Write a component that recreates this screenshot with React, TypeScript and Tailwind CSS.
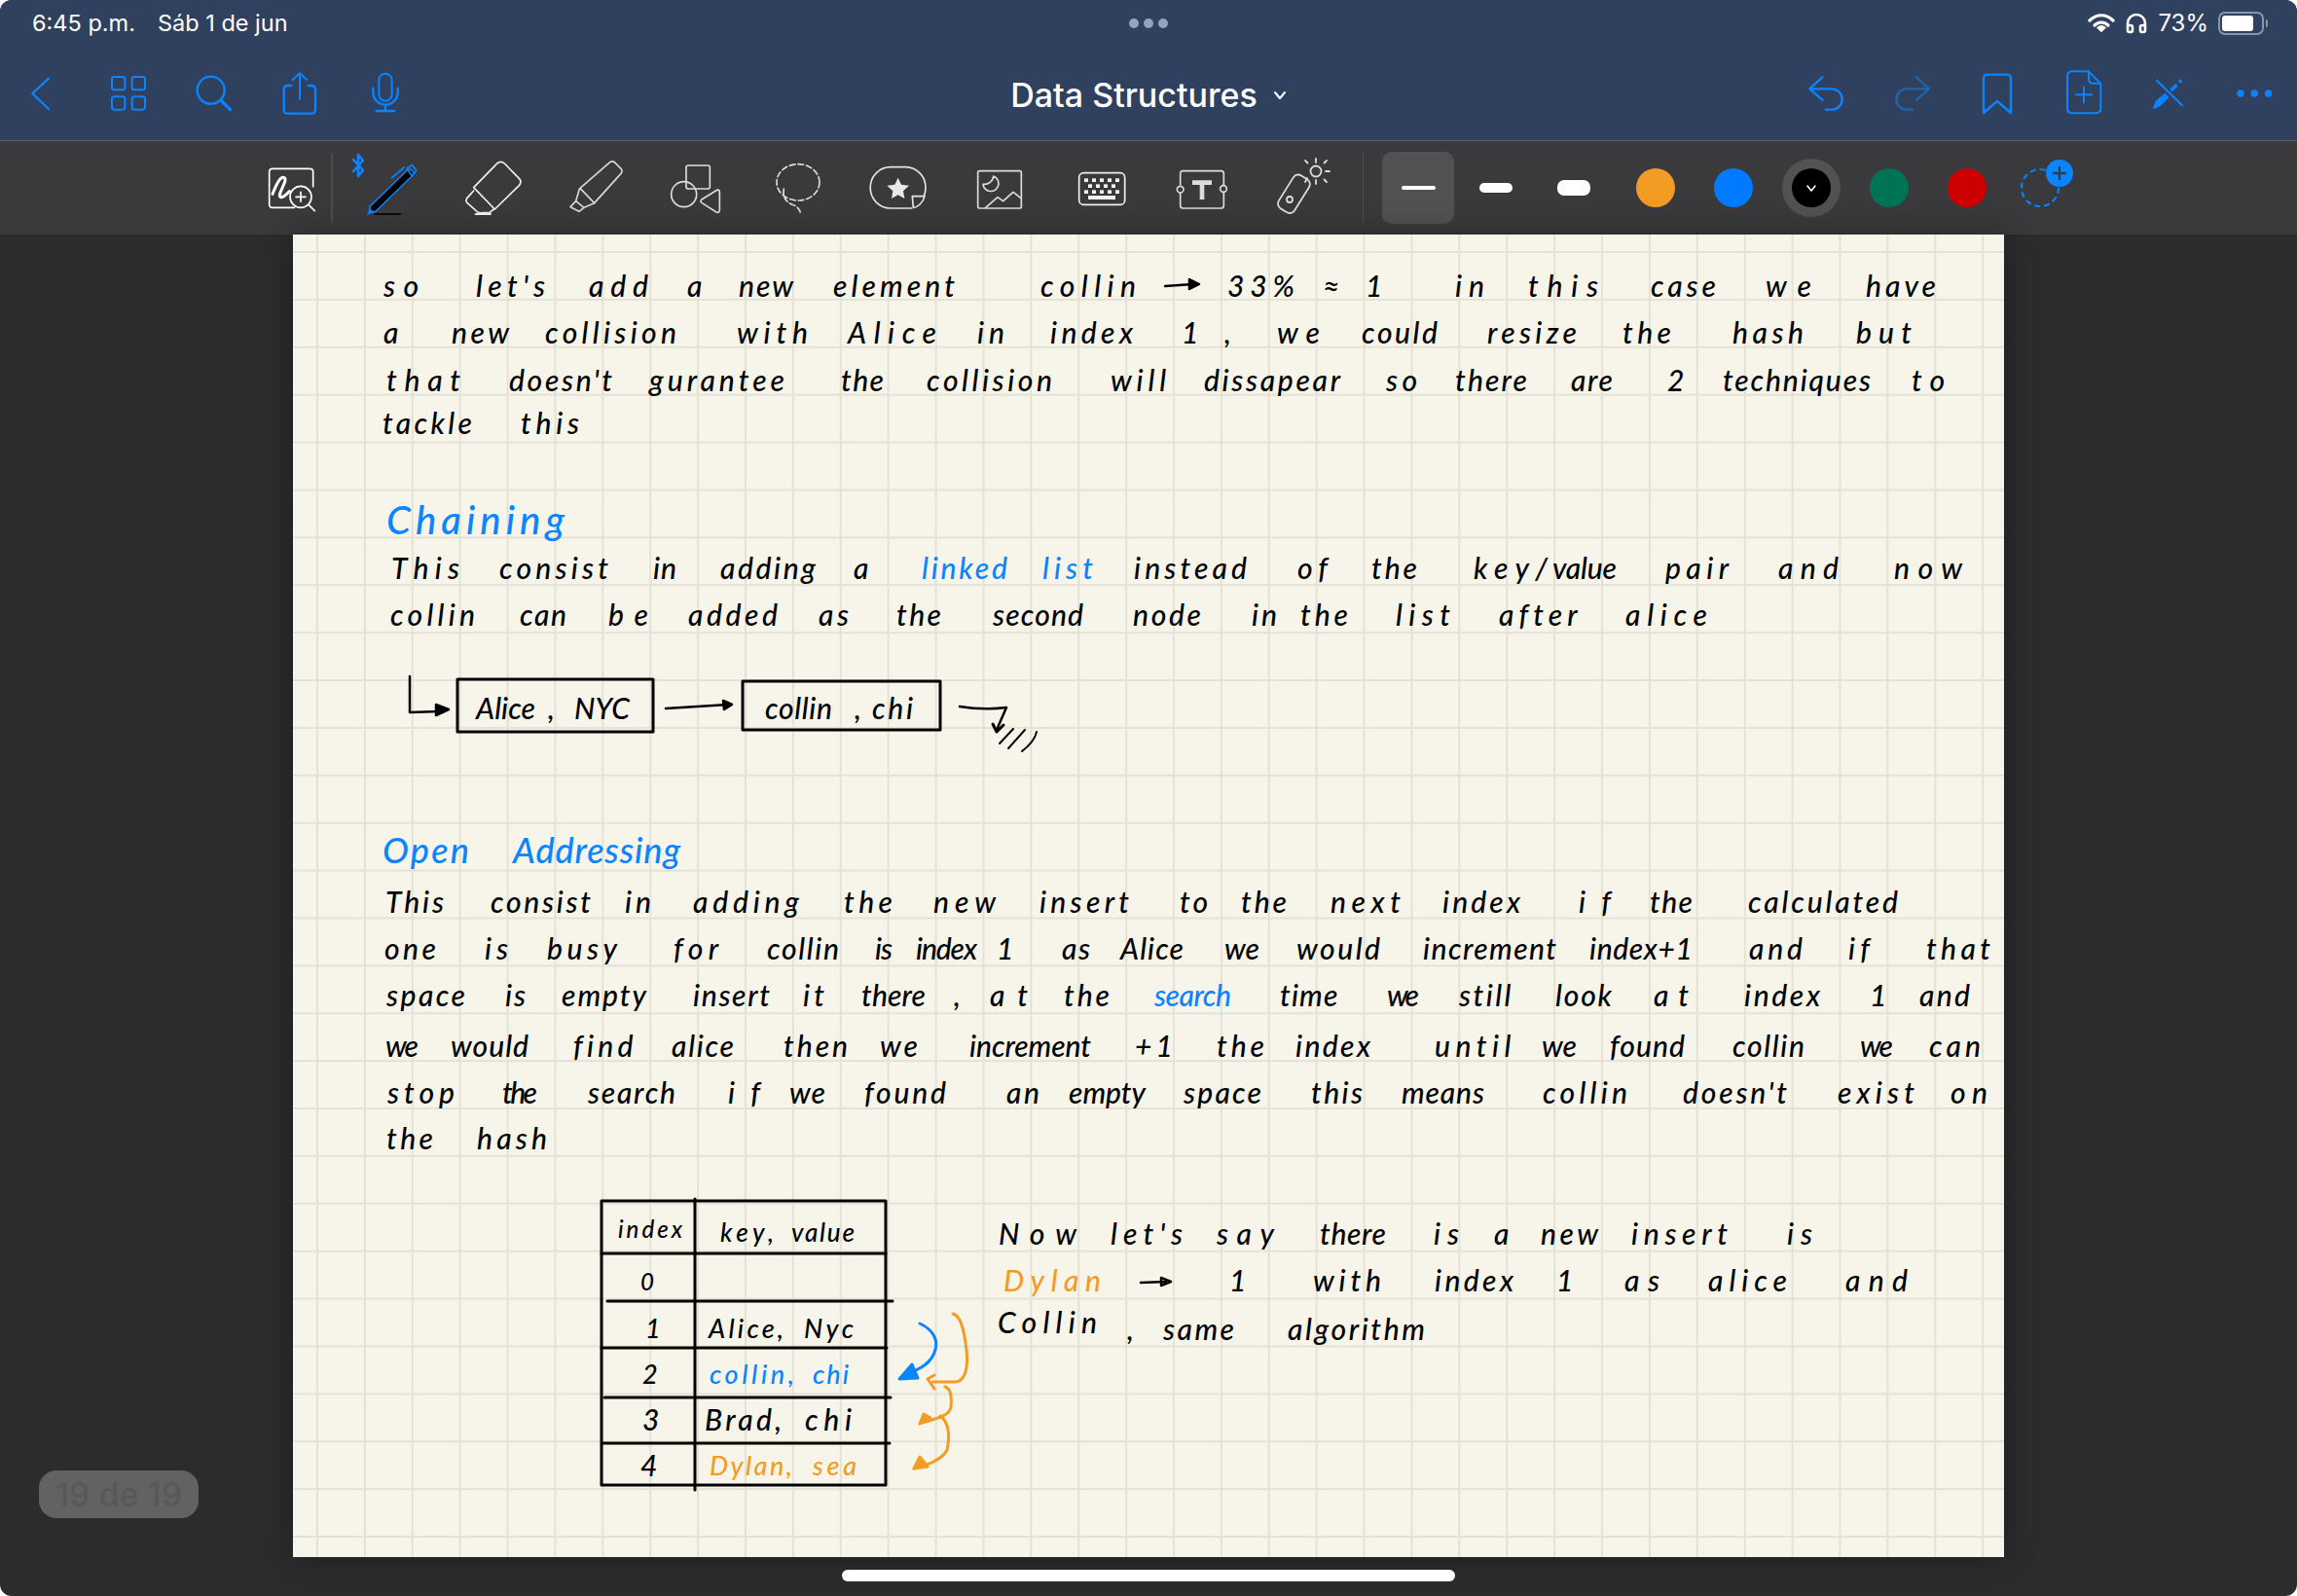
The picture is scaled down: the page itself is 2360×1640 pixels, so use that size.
import { Headphones } from "lucide-react";

type Word = [string, number, number, ("b" | "o")?, number?];
type Line = [number, Word[]];

const BLUE = "#0a84ff";
const ORANGE = "#f39c24";

// ink on the note page: [baseline, [word, x start, x end, colour, size]]
const ink: Line[] = [
  [304, [["so", 394, 430], ["let's", 489, 560], ["add", 605, 666], ["a", 706, 723], ["new", 759, 815], ["element", 856, 981], ["collin", 1069, 1167], ["33%", 1261, 1330], ["≈", 1359, 1382], ["1", 1403, 1411], ["in", 1495, 1525], ["this", 1570, 1642], ["case", 1696, 1763], ["we", 1814, 1861], ["have", 1917, 1989]]],
  [352, [["a", 394, 422], ["new", 464, 523], ["collision", 560, 695], ["with", 757, 830], ["Alice", 871, 962], ["in", 1004, 1032], ["index", 1079, 1164], ["1", 1214, 1232], [",", 1258, 1268], ["we", 1312, 1356], ["could", 1399, 1477], ["resize", 1528, 1620], ["the", 1667, 1717], ["hash", 1780, 1853], ["but", 1907, 1964]]],
  [401, [["that", 397, 473], ["doesn't", 523, 629], ["gurantee", 667, 806], ["the", 864, 908], ["collision", 952, 1081], ["will", 1141, 1198], ["dissapear", 1237, 1377], ["so", 1424, 1456], ["there", 1495, 1569], ["are", 1614, 1657], ["2", 1713, 1731], ["techniques", 1770, 1922], ["to", 1964, 1998]]],
  [445, [["tackle", 393, 485], ["this", 535, 595]]],
  [549, [["Chaining", 397, 580, "b", 40]]],
  [594, [["This", 402, 472], ["consist", 513, 625], ["in", 671, 695], ["adding", 740, 838], ["a", 877, 900], ["linked", 947, 1035, "b"], ["list", 1071, 1123, "b"], ["instead", 1165, 1281], ["of", 1333, 1364], ["the", 1409, 1456], ["key/", 1514, 1590], ["value", 1595, 1661], ["pair", 1711, 1776], ["and", 1827, 1889], ["now", 1946, 2016]]],
  [642, [["collin", 401, 488], ["can", 534, 582], ["be", 625, 666], ["added", 707, 799], ["as", 841, 872], ["the", 921, 967], ["second", 1020, 1113], ["node", 1164, 1234], ["in", 1286, 1312], ["the", 1336, 1385], ["list", 1434, 1490], ["after", 1540, 1620], ["alice", 1670, 1754]]],
  [738, [["Alice", 489, 550], [",", 563, 570], ["NYC", 590, 647], ["collin", 786, 855], [",", 878, 885], ["chi", 896, 938]]],
  [887, [["Open", 393, 482, "b", 36], ["Addressing", 527, 699, "b", 36]]],
  [937, [["This", 396, 456], ["consist", 504, 607], ["in", 642, 669], ["adding", 712, 821], ["the", 867, 917], ["new", 959, 1023], ["insert", 1068, 1160], ["to", 1212, 1241], ["the", 1275, 1322], ["next", 1367, 1439], ["index", 1482, 1562], ["if", 1622, 1655], ["the", 1695, 1739], ["calculated", 1796, 1950]]],
  [985, [["one", 395, 448], ["is", 498, 522], ["busy", 562, 634], ["for", 692, 738], ["collin", 788, 862], ["is", 899, 917], ["index", 941, 1004], ["1", 1024, 1043], ["as", 1091, 1120], ["Alice", 1151, 1216], ["we", 1258, 1294], ["would", 1332, 1418], ["increment", 1462, 1599], ["index+1", 1633, 1739], ["and", 1797, 1852], ["if", 1899, 1921], ["that", 1979, 2045]]],
  [1033, [["space", 397, 478], ["is", 519, 540], ["empty", 577, 664], ["insert", 712, 791], ["it", 825, 847], ["there", 885, 951], [",", 980, 986], ["at", 1017, 1056], ["the", 1093, 1140], ["search", 1186, 1265, "b"], ["time", 1315, 1374], ["we", 1425, 1458], ["still", 1499, 1552], ["look", 1598, 1656], ["at", 1699, 1735], ["index", 1792, 1870], ["1", 1921, 1935], ["and", 1972, 2024]]],
  [1085, [["we", 396, 430], ["would", 463, 543], ["find", 589, 650], ["alice", 690, 754], ["then", 805, 871], ["we", 904, 943], ["increment", 996, 1121], ["+1", 1166, 1205], ["the", 1250, 1299], ["index", 1331, 1408], ["until", 1474, 1552], ["we", 1584, 1620], ["found", 1654, 1731], ["collin", 1780, 1854], ["we", 1911, 1945], ["can", 1982, 2035]]],
  [1133, [["stop", 398, 467], ["the", 516, 552], ["search", 604, 694], ["if", 748, 781], ["we", 811, 848], ["found", 888, 972], ["an", 1034, 1068], ["empty", 1098, 1177], ["space", 1216, 1296], ["this", 1347, 1400], ["means", 1440, 1525], ["collin", 1585, 1672], ["doesn't", 1729, 1836], ["exist", 1888, 1967], ["on", 2004, 2042]]],
  [1180, [["the", 397, 445], ["hash", 490, 562]]],
  [1272, [["index", 635, 701, undefined, 24]]],
  [1276, [["key,", 740, 795, undefined, 26], ["value", 813, 878, undefined, 26]]],
  [1278, [["Now", 1026, 1106], ["let's", 1141, 1215], ["say", 1250, 1309], ["there", 1356, 1424], ["is", 1473, 1499], ["a", 1535, 1550], ["new", 1583, 1642], ["insert", 1676, 1775], ["is", 1836, 1862]]],
  [1326, [["0", 658, 670, undefined, 24], ["Dylan", 1031, 1131, "o"], ["1", 1263, 1282], ["with", 1349, 1419], ["index", 1474, 1555], ["1", 1599, 1616], ["as", 1669, 1705], ["alice", 1755, 1836], ["and", 1896, 1960]]],
  [1369, [["Collin", 1025, 1127]]],
  [1376, [[",", 1158, 1164], ["same", 1195, 1268], ["algorithm", 1323, 1464]]],
  [1375, [["1", 663, 669, undefined, 27], ["Alice,", 728, 805, undefined, 27], ["Nyc", 826, 877, undefined, 27]]],
  [1422, [["2", 660, 673, undefined, 27], ["collin,", 729, 816, "b", 27], ["chi", 835, 872, "b", 27]]],
  [1469, [["3", 660, 673], ["Brad,", 724, 803], ["chi", 827, 875]]],
  [1516, [["4", 658, 673], ["Dylan,", 729, 814, "o", 27], ["sea", 835, 880, "o", 27]]],
];

function InkWord({ word, baseline }: { word: Word; baseline: number }) {
  const [text, x0, x1, tone, size = 30] = word;
  const fit = (el: HTMLSpanElement | null) => {
    if (!el || text.length < 2) return;
    el.style.letterSpacing = "0px";
    const extra = (x1 - x0 - el.getBoundingClientRect().width) / (text.length - 1);
    el.style.letterSpacing = `${extra}px`;
  };
  return (
    <span
      ref={fit}
      className="absolute whitespace-nowrap font-[Lato,sans-serif] font-medium italic leading-none"
      style={{
        left: x0 - 301,
        top: baseline - 241 - size * 0.88,
        fontSize: size,
        color: tone === "b" ? BLUE : tone === "o" ? ORANGE : "#000",
      }}
    >
      {text}
    </span>
  );
}

function InkStrokes() {
  return (
    <svg className="absolute inset-0 h-full w-full" viewBox="301 241 1758 1359" fill="none" strokeLinecap="round" strokeLinejoin="round">
      <g stroke="#000" strokeWidth="2.5">
        <path d="M1197 294 L1226 292" />
        <path d="M1222 287 L1232 292 L1222 297 Z" fill="#000" />
        <path d="M421 695 L421 732 L452 731" />
        <path d="M448 724 L461 729 L448 735 Z" fill="#000" />
        <path d="M684 728 L748 724" />
        <path d="M743 720 L752 724 L744 729 Z" fill="#000" />
        <path d="M986 726 Q1010 730 1034 727 L1024 750" />
        <path d="M1020 744 L1024 752 L1031 745" strokeWidth="3" />
        <path d="M1027 764 L1041 749 M1036 769 L1053 750 M1050 772 Q1063 762 1065 752" strokeWidth="2" />
        <path d="M1172 1318 L1198 1317 M1193 1313 L1203 1317 L1193 1321 Z" />
      </g>
      <g stroke="#000" strokeWidth="3">
        <rect x="470" y="698" width="201" height="54" />
        <rect x="763" y="700" width="203" height="50" />
        <rect x="618" y="1234" width="292" height="292" />
        <path d="M714 1232 V1531 M618 1288 H910 M624 1337 H917 M618 1385 H911 M621 1436 H915 M620 1483 H914" />
      </g>
      <g stroke={BLUE} strokeWidth="3">
        <path d="M945 1360 C958 1366 964 1376 961 1387 C957 1401 945 1407 933 1411" />
        <path d="M924 1417 L937 1402 L943 1416 Z" fill={BLUE} />
      </g>
      <g stroke={ORANGE} strokeWidth="3">
        <path d="M979 1350 C986 1352 990 1362 993 1387 C995 1405 992 1420 981 1420 L958 1420" />
        <path d="M953 1417 L960 1427 M953 1417 L960 1413" />
        <path d="M971 1425 C977 1427 978 1436 977 1446 C975 1456 960 1458 947 1462" />
        <path d="M945 1463 L949 1453 L956 1457 Z" fill={ORANGE} />
        <path d="M966 1455 C975 1462 976 1476 973 1490 C968 1500 950 1507 939 1509" />
        <path d="M939 1509 L945 1497 L953 1507 Z" fill={ORANGE} />
      </g>
    </svg>
  );
}

function NavIcon({ cx, children }: { cx: number; children: React.ReactNode }) {
  return (
    <div className="flex w-[88px] justify-center">
      <svg className="h-[50px] w-[50px]" viewBox={`${cx - 75} 33 150 150`} fill="none" stroke={BLUE} strokeWidth="7" strokeLinecap="round" strokeLinejoin="round">
        {children}
      </svg>
    </div>
  );
}

function ToolIcon({ cx, slot = "w-[104px]", children }: { cx: number; slot?: string; children: React.ReactNode }) {
  return (
    <div className={`relative flex justify-center ${slot}`}>
      <svg className="h-[60px] w-[60px]" viewBox={`${cx - 90} 39 180 180`} fill="none" stroke="#e4e4e4" strokeWidth="5" strokeLinecap="round" strokeLinejoin="round">
        {children}
      </svg>
    </div>
  );
}

const keyRows = [
  [1002, 1026, 1050, 1074, 1098].map((x) => [x, 100]),
  [1014, 1038, 1062, 1086].map((x) => [x, 118]),
  [1002, 1026, 1050, 1074, 1098].map((x) => [x, 136]),
].flat();

function Swatch({ color }: { color: string }) {
  return (
    <div className="flex w-[80px] justify-center">
      <span className="h-[40px] w-[40px] rounded-full" style={{ backgroundColor: color }} />
    </div>
  );
}

export default function App() {
  return (
    <div className="relative flex h-[1640px] w-[2360px] flex-col overflow-hidden rounded-[12px] bg-[#2c2c2e] font-[Inter,sans-serif]">
      {/* status bar */}
      <div className="grid h-[48px] grid-cols-3 items-center bg-[#30415f] px-[33px] pr-[30px] text-[23px] text-white">
        <div className="flex gap-[23px] text-[23.5px]">
          <span>6:45 p.m.</span>
          <span>Sáb 1 de jun</span>
        </div>
        <div className="flex justify-center gap-[5px] pr-[2px]">
          <span className="size-[10px] rounded-full bg-[#95a3bd]" />
          <span className="size-[10px] rounded-full bg-[#95a3bd]" />
          <span className="size-[10px] rounded-full bg-[#95a3bd]" />
        </div>
        <div className="flex items-center justify-end gap-[10px]">
          <svg width="28" height="24" viewBox="0 0 28 24" fill="none" stroke="#fff" strokeWidth="3.2" strokeLinecap="round">
            <path d="M2 9 C9 2 19 2 26 9" />
            <path d="M7 14 C11 10 17 10 21 14" />
            <path d="M14 19 L11.5 16.6 C13 15.5 15 15.5 16.5 16.6 Z" fill="#fff" />
          </svg>
          <Headphones size={24} color="#fff" strokeWidth={2.6} />
          <span className="text-[24px]">73%</span>
          <div className="flex items-center gap-[2px]">
            <div className="flex h-[24px] w-[47px] rounded-[7px] border-2 border-[#8b94a8] p-[2px]">
              <div className="h-full w-[32px] rounded-[3px] bg-white" />
            </div>
            <span className="h-[8px] w-[2px] rounded-r bg-[#8b94a8]" />
          </div>
        </div>
      </div>

      {/* nav bar */}
      <div className="grid h-[97px] grid-cols-[1fr_auto_1fr] items-center border-b border-[#565b64] bg-[#30415f]">
        <div className="flex">
          <NavIcon cx={132}>
            <path d="M150 62 L100 108 L150 156" />
          </NavIcon>
          <NavIcon cx={396}>
            <g strokeWidth="6">
              <rect x="345" y="57" width="40" height="40" rx="7" />
              <rect x="407" y="57" width="40" height="40" rx="7" />
              <rect x="345" y="118" width="40" height="40" rx="7" />
              <rect x="407" y="118" width="40" height="40" rx="7" />
            </g>
          </NavIcon>
          <NavIcon cx={660}>
            <circle cx="650" cy="98" r="42" />
            <path d="M682 130 L710 158" strokeWidth="9" />
          </NavIcon>
          <NavIcon cx={924}>
            <path d="M898 84 H887 Q875 84 875 96 V158 Q875 170 887 170 H960 Q972 170 972 158 V96 Q972 84 960 84 H950" />
            <path d="M924 125 V48 M902 66 L924 46 L946 66" strokeWidth="6" />
          </NavIcon>
          <NavIcon cx={1188}>
            <rect x="1168" y="47" width="40" height="84" rx="20" strokeWidth="6" />
            <path d="M1150 92 V105 A38 38 0 0 0 1226 105 V92 M1188 145 V162 M1160 162 H1216" />
          </NavIcon>
        </div>
        <div className="flex items-center gap-[16px] pt-[3px] text-[34px] font-medium text-white">
          <span>Data Structures</span>
          <svg width="14" height="10" viewBox="0 0 14 10" fill="none" stroke="#fff" strokeWidth="2" strokeLinecap="round" strokeLinejoin="round">
            <path d="M2 2 L7 8 L12 2" />
          </svg>
        </div>
        <div className="flex justify-end">
          <NavIcon cx={108}>
            <path d="M97 58 L58 94 L97 128 M62 94 H125 A33 32 0 0 1 125 158 H108" />
          </NavIcon>
          <NavIcon cx={372}>
            <path d="M387 58 L426 94 L387 128 M422 94 H358 A33 32 0 0 0 358 158 H375" stroke="#1e64ad" />
          </NavIcon>
          <NavIcon cx={636}>
            <path d="M594 168 V62 Q594 50 606 50 H666 Q678 50 678 62 V168 L636 132 Z" />
          </NavIcon>
          <NavIcon cx={900}>
            <g strokeWidth="6">
              <path d="M918 40 H868 Q852 40 852 56 V152 Q852 169 868 169 H938 Q955 169 955 152 V78 Z" />
              <path d="M918 42 V62 Q918 77 933 77 H953 M903 88 V136 M879 112 H928" />
            </g>
          </NavIcon>
          <NavIcon cx={1164}>
            <path d="M1128 68 L1206 145" strokeWidth="6" />
            <path d="M1117 155 L1125 132 L1153 108 L1165 120 L1140 145 Z" fill={BLUE} strokeWidth="2" />
            <path d="M1172 98 L1190 82 M1197 73 L1204 68" strokeWidth="11" strokeLinecap="butt" />
          </NavIcon>
          <NavIcon cx={1428}>
            <g fill={BLUE} stroke="none">
              <circle cx="1386" cy="108" r="11" />
              <circle cx="1429" cy="108" r="11" />
              <circle cx="1472" cy="108" r="11" />
            </g>
          </NavIcon>
        </div>
      </div>

      {/* tool bar */}
      <div className="flex h-[96px] items-center bg-[#3a3a3c] pl-[260px]">
        <ToolIcon cx={120} slot="w-[80px]">
          <g stroke="#fff">
            <path d="M128 190 H60 Q50 190 50 180 V80 Q50 70 60 70 H175 Q185 70 185 80 V125" />
            <path d="M60 148 C72 118 85 90 97 98 C108 108 70 155 86 158 C95 158 102 150 112 140" strokeWidth="9" />
            <circle cx="147" cy="157" r="33" fill="#3a3a3c" />
            <path d="M172 182 L190 200 M147 142 V172 M132 157 H162" />
          </g>
        </ToolIcon>
        <span className="h-[72px] w-[2px] bg-[#4c4c4e]" />
        <div className="ml-[9px] flex">
          <div className="relative">
            <ToolIcon cx={429}>
              <path d="M370 193 L482 84" stroke={BLUE} strokeWidth="28" />
              <path d="M372 191 L482 84" stroke="#000" strokeWidth="19" />
              <path d="M474 70 L490 58 L503 76 L490 92 Z" stroke={BLUE} />
              <path d="M428 98 L466 66" stroke={BLUE} />
              <path d="M353 210 L358 198 L366 206 Z" fill={BLUE} stroke={BLUE} strokeWidth="2" />
              <path d="M374 210 H455" stroke="#000" />
            </ToolIcon>
            <svg className="absolute left-[10px] top-[-6px]" width="14" height="26" viewBox="0 0 14 26" fill="none" stroke={BLUE} strokeWidth="2.6" strokeLinecap="round" strokeLinejoin="round">
              <path d="M2 7 L12 18 L7 24 V2 L12 8 L2 19" />
            </svg>
          </div>
          <ToolIcon cx={741}>
            <g stroke="#f0f0f0">
              <path d="M680 128 L752 54 Q764 44 775 54 L820 100 Q830 110 820 122 L745 195 Z" />
              <path d="M680 138 L660 160 Q654 168 660 175 L690 202 Q697 208 708 206 H728 L742 195" />
              <path d="M686 210 H732" strokeWidth="6" />
            </g>
          </ToolIcon>
          <ToolIcon cx={1053}>
            <g stroke="#d8d8d8">
              <path d="M1008 130 L1100 50 Q1108 45 1114 50 L1134 70 Q1140 78 1134 85 L1052 176 Z" />
              <path d="M1006 132 L995 170 L1020 190 L1052 176 M995 170 L978 188 L1005 202 L1020 190" />
            </g>
          </ToolIcon>
          <ToolIcon cx={1365}>
            <g stroke="#dcdcdc">
              <rect x="1335" y="60" width="73" height="72" rx="6" />
              <circle cx="1328" cy="149" r="39" />
              <path d="M1430 136 Q1438 134 1438 142 V198 Q1436 208 1428 204 L1384 176 Q1376 170 1384 164 Z" />
            </g>
          </ToolIcon>
          <ToolIcon cx={117}>
            <g stroke="#dcdcdc" strokeDasharray="17 9">
              <ellipse cx="120" cy="112" rx="66" ry="56" />
              <path d="M76 132 Q70 165 100 180 Q122 186 128 208" />
            </g>
          </ToolIcon>
          <ToolIcon cx={429}>
            <g stroke="#e4e4e4">
              <path d="M470 192 H405 A62 63 0 0 1 405 65 H452 A62 63 0 0 1 513 128 Q513 142 508 155" />
              <path d="M472 155 H510 C505 175 490 188 475 190 Z" />
            </g>
            <path d="M428 98 L438 119 L462 122 L444 139 L448 162 L428 151 L408 162 L412 139 L394 122 L418 119 Z" fill="#e8e8e8" stroke="none" />
          </ToolIcon>
          <ToolIcon cx={741}>
            <g stroke="#dcdcdc">
              <rect x="674" y="77" width="134" height="115" rx="5" />
              <path d="M722 93 A24 24 0 1 1 690 118 A28 28 0 0 0 722 93 Z" />
              <path d="M698 190 L735 158 L752 170 L783 142 L806 160" />
            </g>
          </ToolIcon>
          <ToolIcon cx={1053}>
            <rect x="986" y="83" width="141" height="98" rx="14" stroke="#f0f0f0" />
            {keyRows.map(([x, y]) => (
              <rect key={`${x}-${y}`} x={x} y={y} width="12" height="11" fill="#f0f0f0" stroke="none" />
            ))}
            <rect x="1014" y="153" width="84" height="12" fill="#f0f0f0" stroke="none" />
          </ToolIcon>
          <ToolIcon cx={1365}>
            <g stroke="#dcdcdc">
              <path d="M1298 120 V85 Q1298 77 1306 77 H1424 Q1432 77 1432 85 V120 M1298 146 V184 Q1298 192 1306 192 H1424 Q1432 192 1432 184 V144" />
              <circle cx="1298" cy="134" r="10" />
              <circle cx="1431" cy="132" r="10" />
            </g>
            <path d="M1335 106 H1395 V120 H1372 V165 H1358 V120 H1335 Z" fill="#dcdcdc" stroke="none" />
          </ToolIcon>
          <div className="flex w-[104px] justify-center">
            <svg className="h-[58px] w-[58px] -translate-y-[1px]" viewBox="0 0 58 58" fill="none" stroke="#dcdcdc" strokeWidth="1.8" strokeLinecap="round" strokeLinejoin="round">
              <rect x="10" y="17" width="19" height="40" rx="6" transform="rotate(32 19 37)" />
              <circle cx="15" cy="43" r="3" />
              <circle cx="42" cy="14" r="5.5" />
              <path d="M42 1 V5 M42 23 V27 M52 14 H56 M50.5 5.5 L53 3 M50.5 22.5 L53 25 M33.5 5.5 L31 3 M33 21 L31 25" />
            </svg>
          </div>
        </div>
        <span className="ml-[9px] h-[72px] w-[1px] bg-[#4c4c4e]" />
        <div className="ml-[19px] flex h-[74px] w-[74px] items-center justify-center rounded-[10px] bg-[#525255]">
          <span className="h-[4px] w-[35px] rounded-full bg-white" />
        </div>
        <div className="ml-[3px] flex items-center">
          <div className="flex w-[80px] justify-center">
            <span className="h-[10px] w-[34px] rounded-full bg-white" />
          </div>
          <div className="flex w-[84px] justify-center pr-[4px]">
            <span className="h-[16px] w-[34px] rounded-[7px] bg-white" />
          </div>
          <Swatch color={ORANGE} />
          <Swatch color="#007aff" />
          <div className="flex w-[80px] justify-center">
            <div className="flex h-[60px] w-[60px] items-center justify-center rounded-full bg-[#525255]">
              <div className="flex h-[40px] w-[40px] items-center justify-center rounded-full bg-black">
                <svg width="10" height="7" viewBox="0 0 10 7" fill="none" stroke="#fff" strokeWidth="1.6" strokeLinecap="round" strokeLinejoin="round">
                  <path d="M1 1 L5 6 L9 1" />
                </svg>
              </div>
            </div>
          </div>
          <Swatch color="#007357" />
          <Swatch color="#cc0000" />
          <div className="relative flex w-[70px] justify-center">
            <span className="h-[40px] w-[40px] rounded-full border-2 border-dashed border-[#0a84ff]" />
            <span className="absolute left-[41px] top-[-9px] flex h-[28px] w-[28px] items-center justify-center rounded-full bg-[#0a84ff]">
              <svg width="16" height="16" viewBox="0 0 16 16" stroke="#2c3a52" strokeWidth="2.4" strokeLinecap="round">
                <path d="M8 2 V14 M2 8 H14" />
              </svg>
            </span>
          </div>
        </div>
      </div>

      {/* note page */}
      <main className="flex flex-1 justify-center">
        <div className="relative h-[1359px] w-[1758px] bg-[#f7f5e9] bg-[linear-gradient(#e4e2d5_2px,transparent_2px),linear-gradient(90deg,#e4e2d5_2px,transparent_2px)] bg-[length:48.9px_48.9px] bg-[position:24px_17px] shadow-[0_0_30px_rgba(0,0,0,0.35)]">
          {ink.flatMap(([baseline, words]) =>
            words.map((word) => <InkWord key={`${baseline}-${word[1]}`} word={word} baseline={baseline} />),
          )}
          <InkStrokes />
        </div>
      </main>

      <div className="absolute left-[40px] top-[1511px] flex h-[49px] w-[164px] items-center justify-center rounded-[18px] bg-[#626264] text-[34px] font-medium text-[#58585a]">
        19 de 19
      </div>
      <div className="absolute bottom-[15px] left-[865px] h-[12px] w-[630px] rounded-full bg-white" />
    </div>
  );
}
